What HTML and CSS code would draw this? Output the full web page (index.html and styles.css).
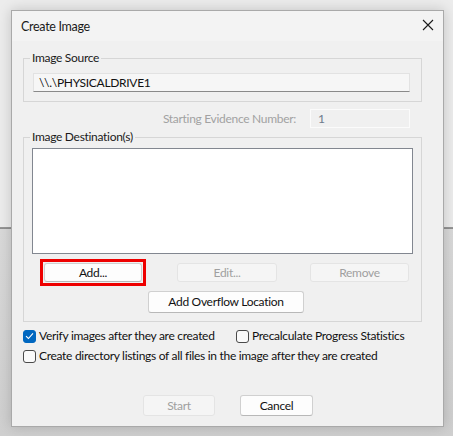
FILE: index.html
```html
<!DOCTYPE html>
<html>
<head>
<meta charset="utf-8">
<link rel="stylesheet" href="styles.css">
</head>
<body>
<div class="backdrop">
  <div class="window">
    <div class="titlebar">
      <span class="title">Create Image</span>
      <svg class="close" width="12" height="12" viewBox="0 0 12 12"><path d="M1 1 L11 11 M11 1 L1 11" stroke="#1a1a1a" stroke-width="1.1" fill="none"/></svg>
    </div>
    <div class="content">
      <fieldset class="group source">
        <legend>Image Source</legend>
        <div class="field source-field">\\.\PHYSICALDRIVE1</div>
      </fieldset>
      <div class="evidence-row">
        <span class="evidence-label">Starting Evidence Number:</span>
        <div class="field evidence-field">1</div>
      </div>
      <fieldset class="group dest">
        <legend>Image Destination(s)</legend>
        <div class="listbox"></div>
        <div class="btn-row">
          <div class="highlight"><button class="btn btn-add">Add...</button></div>
          <button class="btn btn-edit" disabled>Edit...</button>
          <button class="btn btn-remove" disabled>Remove</button>
        </div>
        <button class="btn btn-overflow">Add Overflow Location</button>
      </fieldset>
      <div class="check-row first">
        <label class="check check-verify"><span class="box checked"><svg width="9" height="8" viewBox="0 0 9 8"><path d="M1 4.2 L3.4 6.5 L8 1.3" stroke="#fff" stroke-width="1.1" fill="none"/></svg></span>Verify images after they are created</label>
        <label class="check"><span class="box"></span>Precalculate Progress Statistics</label>
      </div>
      <div class="check-row">
        <label class="check"><span class="box"></span>Create directory listings of all files in the image after they are created</label>
      </div>
      <div class="footer">
        <button class="btn btn-start" disabled>Start</button>
        <button class="btn btn-cancel">Cancel</button>
      </div>
    </div>
  </div>
</div>
</body>
</html>
```
FILE: styles.css
```css
* { box-sizing: border-box; }
html, body { margin: 0; padding: 0; }
body {
  width: 453px;
  height: 436px;
  overflow: hidden;
  font-family: Lato, "Noto Sans", sans-serif;
  font-size: 12px;
  letter-spacing: -0.3px;
  line-height: 16px;
  color: #000;
  background:
    linear-gradient(to bottom, #ececec 0, #ececec 227px, #9a9a9a 227px, #8c8c8c 229px, #d9d9d9 229px, #cfcfcf 436px);
}
.backdrop {
  padding: 10px 0 0 11px;
}
.window {
  width: 433px;
  height: 417px;
  border: 1px solid #a9a9a9;
  background: #f0f0f0;
  box-shadow: 0 0 12px rgba(0,0,0,0.18);
  display: flex;
  flex-direction: column;
}
.titlebar {
  height: 30px;
  background: #f3f3f3;
  display: flex;
  align-items: center;
  justify-content: space-between;
  padding: 0 9px 0 9px;
}
.title { font-size: 12.5px; color: #1a1a1a; padding-top: 1px; }
.close { margin-top: -2px; }
.content {
  padding: 9px 21px 0 11px;
  display: flex;
  flex-direction: column;
}
.group {
  margin: 0;
  border: 1px solid #d6d6d6;
  min-width: 0;
}
.group legend {
  padding: 0 2px;
  color: #1a1a1a;
  line-height: 16px;
}
.source { padding: 7px 11px 9px 9px; }
.source legend { margin-left: -3px; }
.field {
  height: 19px;
  line-height: 17px;
  padding: 0 5px;
  border: 1px solid #e2e2e2;
}
.source-field {
  background: #f6f6f6;
  border-bottom-color: #8a8a8a;
  color: #111;
}
.evidence-row {
  display: flex;
  justify-content: flex-end;
  align-items: center;
  margin-top: 7px;
  padding-right: 12px;
}
.evidence-label { color: #a2a2a2; margin-right: 14px; }
.evidence-field {
  width: 100px;
  height: 19px;
  padding-left: 7px;
  border-color: #fbfbfb;
  color: #6e7a8c;
}
.dest {
  margin-top: 1px;
  padding: 3px 8px 8px 8px;
}
.dest legend { margin-left: -2px; }
.listbox {
  height: 106px;
  background: #fff;
  border: 1px solid #828790;
}
.btn-row {
  display: flex;
  align-items: center;
  margin-top: 5px;
}
.btn {
  font-family: inherit;
  font-size: 12px;
  letter-spacing: -0.3px;
  line-height: 16px;
  height: 19px;
  padding: 0;
  border: 1px solid #d0d0d0;
  border-bottom-color: #b8b8b8;
  border-radius: 3px;
  background: #fdfdfd;
  color: #111;
}
.btn:disabled {
  background: #f5f5f5;
  border-color: #e4e4e4;
  color: #a0a0a0;
}
.highlight {
  margin-left: 8px;
  border: 3px solid #ee0000;
  padding: 1px;
  display: flex;
}
.btn-add { width: 98px; }
.btn-edit { width: 100px; margin-left: 31px; }
.btn-remove { width: 99px; margin-left: 33px; }
.btn-overflow {
  align-self: flex-start;
  width: 156px;
  height: 22px;
  margin: 5px 0 0 116px;
  display: block;
}
.check-row {
  display: flex;
  align-items: center;
  height: 16px;
  margin-top: 4px;
}
.check-row.first { margin-top: 6px; }
.check {
  display: flex;
  align-items: center;
  color: #111;
  white-space: nowrap;
}
.check-verify { width: 213px; }
.box {
  width: 13px;
  height: 13px;
  border: 1px solid #4a4a4a;
  border-radius: 3px;
  background: #fafafa;
  margin-right: 3px;
  display: flex;
  align-items: center;
  justify-content: center;
}
.box.checked { background: #0067c0; border-color: #0067c0; }
.footer {
  display: flex;
  margin-top: 31px;
  padding-left: 120px;
}
.btn-start { width: 72px; height: 21px; }
.btn-cancel { width: 73px; height: 21px; margin-left: 25px; }
```
